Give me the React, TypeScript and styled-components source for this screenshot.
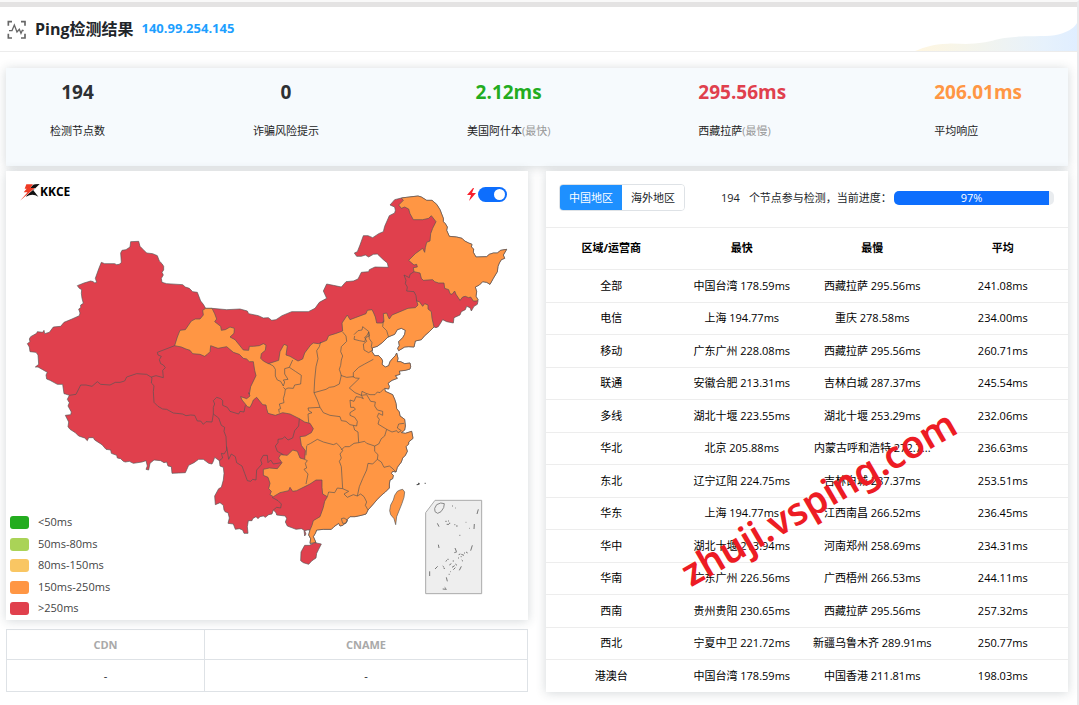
import React, { useState } from "react";
import styled, { createGlobalStyle } from "styled-components";

const GlobalStyle = createGlobalStyle`
  *, *::before, *::after { box-sizing: border-box; }
  body {
    margin: 0;
    background: #fff;
    color: #212529;
    font: 11px/16px "Open Sans", "Noto Sans CJK SC", sans-serif;
  }
  button, input { font: inherit; margin: 0; }
`;

const Page = styled.div`
  min-height: 100vh;
  border-top: 2px solid #f9f9f9;
  border-right: 2px solid #e9e9eb;
`;

const TopBand = styled.div`
  height: 5px;
  background: #e4e3e3;
`;

const Header = styled.header`
  position: relative;
  display: flex;
  align-items: center;
  height: 45px;
  padding-left: 7px;
  border-bottom: 1px solid #ececec;
`;

const Title = styled.h1`
  margin: 0 8px 0 9px;
  font-size: 16px;
  line-height: 24px;
  font-weight: 700;
`;

const Address = styled.span`
  margin-bottom: 2px;
  font-size: 13px;
  font-weight: 700;
  color: #1e9fff;
`;

const Wave = styled.svg`
  position: absolute;
  right: 0;
  bottom: 0;
  width: 162px;
  height: 28px;
`;

const Content = styled.main`
  padding: 16px 9px 12px 6px;
`;

const cardShadow = "0 1px 10px rgba(40, 60, 70, 0.2)";

const Stats = styled.section`
  display: flex;
  justify-content: space-between;
  height: 98px;
  padding: 12px 46px 0 44px;
  background: #f6fafd;
  box-shadow: ${cardShadow};
`;

const StatValue = styled.div<{ $color: string }>`
  font-size: 19px;
  line-height: 24px;
  font-weight: 700;
  text-align: center;
  color: ${(p) => p.$color};
`;

const StatLabel = styled.div`
  margin-top: 19px;
  color: #222;
`;

const Muted = styled.span`
  color: #999;
`;

const Columns = styled.div`
  display: grid;
  grid-template-columns: 1fr 1fr;
  gap: 18px;
  align-items: start;
  margin-top: 5px;
`;

const Card = styled.section`
  position: relative;
  background: #fff;
  box-shadow: ${cardShadow};
`;

const MapDrawing = styled.svg`
  display: block;
  width: 100%;
`;

const Logo = styled.div`
  position: absolute;
  top: 12px;
  left: 14px;
  display: flex;
  align-items: center;
  font-size: 12px;
  font-weight: 700;
  color: #000;
`;

const SpeedToggle = styled.label`
  position: absolute;
  top: 16px;
  right: 21px;
  display: flex;
  align-items: center;
  gap: 2px;
`;

const Switch = styled.input`
  appearance: none;
  display: flex;
  align-items: center;
  width: 29px;
  height: 15px;
  padding: 0 2px;
  border-radius: 8px;
  background: #b5bbc2;
  cursor: pointer;
  &::before {
    content: "";
    width: 11px;
    height: 11px;
    border-radius: 50%;
    background: #fff;
  }
  &:checked {
    justify-content: flex-end;
    background: #0d6efd;
  }
`;

const Legend = styled.ul`
  position: absolute;
  left: 4px;
  bottom: 5px;
  display: flex;
  flex-direction: column;
  justify-content: space-between;
  height: 99px;
  margin: 0;
  padding: 0;
  list-style: none;
`;

const LegendItem = styled.li`
  display: flex;
  align-items: center;
  gap: 9px;
  height: 13px;
  line-height: 11px;
  color: #444;
`;

const LegendText = styled.span`
  padding-bottom: 2px;
`;

const Swatch = styled.span<{ $color: string }>`
  width: 19px;
  height: 13px;
  border-radius: 3px;
  background: ${(p) => p.$color};
`;

const RecordTable = styled.table`
  width: 100%;
  margin-top: 9px;
  border-collapse: collapse;
  table-layout: fixed;
  text-align: center;
  th, td {
    height: 32px;
    padding: 0;
    border: 1px solid #dee2e6;
  }
  th {
    height: 30px;
    font-weight: 700;
    color: #a9a9a9;
  }
  th:first-child { width: 38%; }
`;

const Toolbar = styled.div`
  display: flex;
  align-items: center;
  height: 56px;
  padding: 0 14px 3px 13px;
`;

const Tabs = styled.div`
  display: flex;
  border: 1px solid #dee2e6;
  border-radius: 4px;
  overflow: hidden;
`;

const Tab = styled.button<{ $active: boolean }>`
  height: 25px;
  padding: 0 9px;
  border: 0;
  color: ${(p) => (p.$active ? "#fff" : "#212529")};
  background: ${(p) => (p.$active ? "#1e90ff" : "#fff")};
  cursor: pointer;
`;

const NodeCount = styled.span`
  margin: 0 9px 0 36px;
`;

const Progress = styled.div`
  flex: 1;
  height: 14px;
  margin-left: 2px;
  border-radius: 5px;
  overflow: hidden;
  background: #e9ecef;
`;

const ProgressFill = styled.div`
  height: 100%;
  line-height: 13px;
  text-align: center;
  color: #fff;
  background: #0d6efd;
`;

const ResultTable = styled.table`
  width: 100%;
  border-spacing: 0;
  table-layout: fixed;
  text-align: center;
  color: #000;
  th, td {
    height: 33px;
    padding: 0 5px;
    border-top: 1px solid #ededed;
    overflow: hidden;
    text-overflow: ellipsis;
    white-space: nowrap;
  }
  th {
    height: 42px;
    padding-bottom: 2px;
    font-weight: 700;
  }
  tbody tr:nth-child(even) td {
    height: 32px;
    padding-bottom: 2px;
  }
`;

const Watermark = styled.div`
  position: absolute;
  top: 326px;
  left: 50%;
  transform: translate(-50%, -50%) translateX(11px) rotate(-30deg);
  font-family: "Noto Sans", sans-serif;
  font-size: 38px;
  line-height: 48px;
  font-weight: 600;
  white-space: nowrap;
  color: #ed1c24;
  pointer-events: none;
`;

/* The map is digitised on sheets; each sheet has its own origin. */
type Sheet = [number, number];
const NW: Sheet = [0, 0];
const NE: Sheet = [780, 0];
const SW: Sheet = [0, 675];
const SE: Sheet = [780, 675];
const MID: Sheet = [720, 405];

const on = ([dx, dy]: Sheet, points: string) =>
  points
    .split(" ")
    .map((pair) => {
      const [x, y] = pair.split(",").map(Number);
      return `${x + dx},${y + dy}`;
    })
    .join(" ");

const heilongjiangCoast = on(
  NE,
  "424,99 440,97 474,93 484,96 500,106 516,106 530,118 540,134 550,160 550,170 556,176 562,186 560,196 568,214 590,216 606,220 614,228 626,234 636,238 634,246 641,252 640,262 648,276 680,275 688,268 700,264 712,264 722,256 740,253 730,270 734,280 724,284 718,294 714,304 712,320 700,340 690,358 680,352 668,350 658,360 646,366 650,380 648,394 654,404"
);

const eastCoast = [
  on(
    NE,
    "522,486 508,500 494,512 484,524 466,528 462,546 446,545 434,546 416,557 413,550 418,542 416,530 428,518 434,508 436,496 424,490 412,494 404,508 384,516 368,532 352,544 338,548 336,560 344,572 356,572 364,580 368,588 366,598 376,606 386,602 390,590 398,580 406,572 410,564 414,580 412,590 422,590 434,596 450,594 452,604 450,612 436,616 418,618 420,628 406,632 412,640 396,646 384,655 388,664 386,672 374,670"
  ),
  on(
    SE,
    "376,4 398,14 404,28 408,40 410,56 418,66 420,78 434,88 436,108 434,120 424,128 436,130 455,124 459,145 446,156 446,162 438,170 442,184 436,196 428,204 424,216 412,232 408,246 398,244 394,250 400,256 398,266 390,270 388,282 388,294 376,306 364,316 352,328 340,342 324,360 318,372 304,376 285,380 270,380 262,388 260,396 248,406 240,408 236,400 222,410 214,418 190,418 170,420 166,430 160,440 168,458 150,460 152,446 146,435 150,420"
  ),
].join(" ");

const mainland = [
  on(
    NW,
    "82,536 90,530 88,522 92,515 110,505 112,500 128,502 132,496 134,506 148,502 160,486 182,484 192,472 216,462 238,452 240,444 236,432 242,428 242,420 250,415 246,400 244,385 245,374 238,370 232,362 252,354 272,348 280,350 284,354 290,352 286,340 296,312 304,292 314,296 344,296 350,299 358,298 364,292 362,264 366,256 378,254 390,246 392,230 416,229 420,244 430,254 440,264 458,266 472,272 478,288 486,296 491,304 491,315 486,322 490,330 484,340 486,352 500,356 548,359 556,366 568,370 578,380 592,382 602,408 610,418 617,430 636,430 680,434 720,432 742,438 746,446 775,452 790,459"
  ),
  on(
    NE,
    "25,458 35,466 48,464 66,452 95,440 145,440 165,430 178,412 200,400 190,378 200,357 220,361 244,366 258,350 280,348 294,342 304,322 326,320 328,314 345,306 385,307 382,294 370,284 352,267 340,268 326,276 316,270 304,274 290,274 283,264 292,260 300,240 310,212 324,212 338,218 356,206 370,200 374,184 388,152 404,144 406,136 404,126 390,120 404,104"
  ),
  heilongjiangCoast,
  on(
    NE,
    "654,408 652,418 642,424 634,438 630,428 620,424 616,434 604,440 600,450 582,458 580,474 560,470 548,464 542,474 535,485 528,488"
  ),
  eastCoast,
  on(
    SE,
    "142,420 134,422 138,432 134,438 132,420 124,416 108,418 82,408 76,396 80,386 76,378 50,375 48,368 40,360 36,372 26,374 16,382 10,378 0,380"
  ),
  on(
    SW,
    "774,386 768,380 758,386 756,392 745,392 742,410 744,430 732,430 728,420 718,416 706,418 700,402 684,400 688,384 684,368 676,366 672,360 670,346 660,338 646,344 644,318 656,296 664,292 670,270 672,250 670,232 660,228 658,212 644,202 640,214 636,222 626,220 610,208 596,208 582,218 566,226 556,248 536,249 516,250 514,230 504,228 500,216 492,218 482,212 462,210 450,220 446,240 438,238 442,228 438,212 426,216 400,220 388,214 376,216 370,214 362,206 352,204 350,196 334,190 332,180 318,178 306,164 284,150 280,143 266,143 262,152 254,144 236,138 226,128 210,118 204,110 206,96 196,76 212,74 214,66 204,48 208,38 202,28 208,16 196,12"
  ),
  on(
    NW,
    "192,686 190,672 188,658 172,658 150,646 140,642 138,630 142,622 128,614 114,606 106,606 116,598 114,570 108,562 90,560 88,546"
  ),
].join(" ");

const heilongjiang = [
  heilongjiangCoast,
  on(
    NE,
    "650,408 640,408 632,396 626,398 616,394 608,396 600,406 588,388 584,378 576,388 570,386 566,374 554,370 552,354 536,354 524,350 518,344 490,346 484,340 480,324 462,320 460,308 472,306 470,298 462,300 446,286 466,266 488,250 494,262 496,248 500,232 510,228 512,206 518,190 528,170 514,152 506,160 488,164 460,164 450,146 446,132 434,126 424,130 416,120 430,106"
  ),
].join(" ");

const centralProvinces = [
  on(
    NW,
    "524,542 532,516 540,496 556,494 574,468 586,462 600,462 610,450 608,436 617,430 636,430 644,446 650,462 644,470 662,484 664,496 676,494 690,486 703,490 702,505 690,516 705,524 718,540 730,555 746,556 748,544 760,544 778,542 790,536 798,540 796,556 784,566 782,580 790,588"
  ),
  on(
    NE,
    "25,596 56,586 60,560 72,538 82,542 78,570 90,574 114,588 128,582 134,564 152,540 160,534 176,536 200,526 206,512 226,506 248,498 246,474 262,450 270,464 286,458 318,446 322,436 336,434 341,444 346,456 350,474 366,474 372,470 370,446 380,444 384,454 388,462 396,450 420,440 444,430 466,428 474,420 470,408 478,410 488,424 494,416 504,420 504,432 514,440 516,460"
  ),
  eastCoast,
  on(
    SE,
    "156,406 160,392 180,380 190,352 194,334 202,320 188,312 186,292 186,270 168,270 150,282 130,292 110,302 98,304 90,292 86,302 60,308 40,320 30,314 34,304 26,296 30,280 24,262 10,256 10,238 28,234 52,236 66,218 56,204 62,194 82,196 98,180 112,184 120,204 134,208 136,182 124,166 120,140 136,138 154,128 160,116 150,100 134,96 118,86 90,72 68,68 46,76 24,70 20,56"
  ),
  on(SW, "798,45 788,44 770,22 760,30 756,40 750,52 742,50 736,42 726,30 722,20 740,26 750,18 746,8"),
  on(
    NW,
    "748,688 752,665 768,632 764,616 760,590 748,590 740,582 730,580 718,568 700,562 680,545 654,550 632,542 630,560 622,568 614,574 600,568 578,566 570,556 558,552 544,546"
  ),
].join(" ");

const taiwan = on(SE, "420,300 428,298 434,306 432,322 426,340 418,360 410,380 407,404 402,386 392,374 389,362 392,345 400,330 404,316 412,304");
const hainan = on(SE, "134,466 148,466 164,458 184,462 176,478 170,490 168,504 156,512 146,523 130,518 122,512 123,486");

const borders = [
  on(NW, "524,542 498,552 472,562 474,570 484,574 478,584 482,596 490,600 496,608 488,616 490,638 468,632 454,636"),
  on(NW, "208,691 228,688 242,660 258,660 276,664 292,650 302,658 330,660 346,652 360,652 374,648 380,636 410,626 440,628 456,638 454,654 462,662 460,680 462,712 474,724 488,732 500,733 520,744 548,747 558,752 572,750 584,751 592,768 602,768 610,778 618,770 636,771 640,747"),
  on(SW, "640,72 640,52 644,42 640,32 650,22 662,26 668,32 668,46 682,52 690,64 716,72 720,64 732,66 736,46"),
  on(SW, "640,72 656,84 664,106 674,112 672,124 678,140 680,180 672,192 664,190 668,204 658,212"),
  on(SW, "680,170 686,208 694,192 706,200 710,218 726,228 734,250 742,272 752,274 758,268 768,270 770,240 786,222 782,210 790,196 802,196 804,218 812,210 820,222 844,218"),
  on(SE, "36,322 54,332 64,342 62,354 50,352 40,360"),
  on(SE, "118,86 116,108 104,122 98,144 84,150 74,140 68,146 54,148 54,158 46,168 52,184 70,194"),
  on(MID, "85,190 100,198 106,208 106,228 112,240 122,244 130,258 134,246 130,240 144,238 134,222 134,206 148,202 158,180"),
  on(MID, "148,202 166,214 184,226 182,252 164,255 160,265 144,264 136,268 130,262"),
  on(MID, "136,268 134,282 130,296 132,308 118,312 122,326 116,328 118,338"),
  on(MID, "242,126 238,140 230,152 234,176 228,200 224,240 222,278"),
  on(MID, "308,96 318,108 320,124 304,140 302,155 308,168 304,180 302,196 298,208 304,226 298,252 282,260 268,262 258,268 222,278"),
  on(MID, "222,278 232,300 240,322 204,324 206,332 216,338 204,342 206,368"),
  on(MID, "240,322 250,338 270,346 300,350 304,362 318,364 330,374 340,376"),
  on(MID, "340,376 350,378 352,364 344,352 330,346 330,338 346,328 342,322 332,322 330,300 342,304 348,290 362,292 370,296 364,286"),
  on(MID, "302,226 320,232 340,230 346,234 358,235 328,264 345,278 364,286"),
  on(MID, "340,232 340,218 356,202 374,192 400,178"),
  on(MID, "342,104 354,92 366,90 368,80 378,88 386,94 388,108 378,112 374,125 358,122 342,118 344,108"),
  on(MID, "386,96 380,108 374,112 380,124 370,132 372,150 386,158 398,150 394,140 396,128 388,116 386,96"),
  on(MID, "430,62 428,80 440,92 446,112"),
  on(NE, "462,320 450,328 448,338 432,330 438,346 436,356 442,366 440,378 462,380 468,392 470,408"),
  on(MID, "364,286 366,274 378,280 390,284 405,284 412,276 420,278 432,266"),
  on(MID, "364,286 380,284 392,304 406,306 404,318 412,330 428,334 428,346 416,340 412,350 418,358 414,372 440,388"),
  on(MID, "440,388 456,396 470,392 474,398 484,392 472,384 476,372 492,370"),
  on(MID, "440,388 434,408 424,416 416,432 404,438"),
  on(MID, "340,376 344,390 354,396 356,428 374,424 380,430 404,438"),
  on(MID, "200,436 212,430 232,418 250,426 280,434 290,430 300,440 308,452 300,462 304,474 298,484 304,500 308,566"),
  on(MID, "304,450 314,440 328,440 342,430 356,428"),
  on(SE, "138,196 140,168"),
  on(SE, "134,208 142,212 136,220 140,234 132,238 144,252 138,282"),
  on(SE, "202,320 206,306 224,308 232,294 248,296 266,304 252,312 262,322 280,314 292,318 298,290 308,266 320,240 324,220 338,222 352,208 354,194 344,184 344,168"),
  on(SE, "352,208 364,216 372,232 388,228 396,234 408,246"),
  on(SE, "292,318 302,312 312,320 320,336 316,346 324,360"),
  on(SE, "244,386 252,384 262,390 258,400 248,400 244,386"),
];

const islets =
  "M532,400l5,10M535,464l2,10M509,544v14M655,358l-4,14M643,402l-1,15M637,466l-5,16M604,529l-6,12M559,562l3,12M525,537l8,-8M548,597l12,1M554,592l4,4M576,348h3M585,354h2M556,394h4M560,403h7M564,393h3M569,398v4M583,404h3M588,408h5M617,397h2M627,415h2M598,436h3M585,474l4,10M583,488l8,-3M596,494l5,-2M604,493l8,3M594,504h3M605,510l4,4M618,486l5,3M578,513h4M557,514l4,-3M548,528l4,4M551,535h4M568,525l6,-4M576,532l8,-5M580,539l6,-6M586,522l5,4M570,545h2M566,553h3M562,508h4M602,500h3M612,489h3";

const legend = [
  { color: "#23ac1f", label: "<50ms" },
  { color: "#aad357", label: "50ms-80ms" },
  { color: "#f9c663", label: "80ms-150ms" },
  { color: "#ff9644", label: "150ms-250ms" },
  { color: "#e0404d", label: ">250ms" },
];

const stats = [
  { value: "194", color: "#2d3033", label: "检测节点数" },
  { value: "0", color: "#2d3033", label: "诈骗风险提示" },
  { value: "2.12ms", color: "#23ac1f", label: "美国阿什本", note: "(最快)" },
  { value: "295.56ms", color: "#e0404d", label: "西藏拉萨", note: "(最慢)" },
  { value: "206.01ms", color: "#ff9644", label: "平均响应" },
];

const results = [
  ["全部", "中国台湾 178.59ms", "西藏拉萨 295.56ms", "241.08ms"],
  ["电信", "上海 194.77ms", "重庆 278.58ms", "234.00ms"],
  ["移动", "广东广州 228.08ms", "西藏拉萨 295.56ms", "260.71ms"],
  ["联通", "安徽合肥 213.31ms", "吉林白城 287.37ms", "245.54ms"],
  ["多线", "湖北十堰 223.55ms", "湖北十堰 253.29ms", "232.06ms"],
  ["华北", "北京 205.88ms", "内蒙古呼和浩特 272.7...", "236.63ms"],
  ["东北", "辽宁辽阳 224.75ms", "吉林白城 287.37ms", "253.51ms"],
  ["华东", "上海 194.77ms", "江西南昌 266.52ms", "236.45ms"],
  ["华中", "湖北十堰 213.94ms", "河南郑州 258.69ms", "234.31ms"],
  ["华南", "广东广州 226.56ms", "广西梧州 266.53ms", "244.11ms"],
  ["西南", "贵州贵阳 230.65ms", "西藏拉萨 295.56ms", "257.32ms"],
  ["西北", "宁夏中卫 221.72ms", "新疆乌鲁木齐 289.91ms", "250.77ms"],
  ["港澳台", "中国台湾 178.59ms", "中国香港 211.81ms", "198.03ms"],
];

const regions = ["中国地区", "海外地区"];

function ChinaMap() {
  return (
    <MapDrawing viewBox="18 18 1566 1347" role="img" aria-label="中国地图">
      <g stroke="#555" strokeOpacity="0.65" strokeWidth="3" strokeLinejoin="round">
        <polygon points={mainland} fill="#e0404d" />
        <polygon points={heilongjiang} fill="#ff9644" />
        <polygon points={centralProvinces} fill="#ff9644" />
        <polygon points={taiwan} fill="#ff9644" />
        <polygon points={hainan} fill="#e0404d" />
        {borders.map((line) => (
          <polyline key={line} points={line} fill="none" />
        ))}
      </g>
      <g transform="translate(780 675)" stroke="#777" strokeWidth="3" fill="none">
        <path d="M525,331H665V611H497V368Z" fill="#eee" stroke="#aaa" />
        <path d="M530,344l12,-5l11,2l-2,12l-8,12l-10,5l-8,-5l-1,-10z" stroke="#888" />
        <path d={islets} />
        <path d="M470,284l8,-2M474,280l5,1M494,280h3" stroke="#555" strokeWidth="4" />
      </g>
    </MapDrawing>
  );
}

export default function App() {
  const [region, setRegion] = useState(0);
  const progress = 97;

  return (
    <>
      <GlobalStyle />
      <Page>
        <TopBand />
        <Header>
          <svg width="19" height="19" viewBox="0 0 57 57" fill="none" stroke="#666" strokeWidth="5">
            <path d="M4,17V5H15M42,5H54V17M4,41V54H15M42,54H54V41" />
            <path d="M6,32H15L22,15L30,36L37,28L42,40L46,31L50,32" strokeWidth="4" />
          </svg>
          <Title>Ping检测结果</Title>
          <Address>140.99.254.145</Address>
          <Wave viewBox="0 0 486 84" preserveAspectRatio="none" aria-hidden="true">
            <defs>
              <linearGradient id="wave">
                <stop offset="0" stopColor="#fff6e0" />
                <stop offset="0.3" stopColor="#f6f5ea" />
                <stop offset="0.8" stopColor="#e6f1fc" />
                <stop offset="1" stopColor="#e0eeff" />
              </linearGradient>
            </defs>
            <path
              fill="url(#wave)"
              d="M0,84C30,72 50,64 100,62C135,61 160,66 210,58C250,50 260,42 340,40C395,39 425,40 450,28C470,20 480,10 486,0V84Z"
            />
          </Wave>
        </Header>
        <Content>
          <Stats>
            {stats.map((s) => (
              <div key={s.label}>
                <StatValue $color={s.color}>{s.value}</StatValue>
                <StatLabel>
                  {s.label}
                  {s.note && <Muted>{s.note}</Muted>}
                </StatLabel>
              </div>
            ))}
          </Stats>
          <Columns>
            <div>
              <Card>
                <ChinaMap />
                <Logo>
                  <svg width="20" height="18" viewBox="60 57 60 54">
                    <path fill="#111" d="M88,74L99,63Q103,60 119,60L100,79L115,98Q98,86 78,98Z" />
                    <path fill="#fff" d="M106,72L60,111L86,84L92,72Z" />
                    <path fill="#ef3b24" d="M79,61H99L91,72H104L60,110L83,85H71L80,74H74Z" />
                  </svg>
                  KKCE
                </Logo>
                <SpeedToggle>
                  <svg width="9" height="13" viewBox="0 0 9 13">
                    <path fill="#f8202c" d="M6,0L0,7H4L2,13L9,5H5L7,0Z" />
                  </svg>
                  <Switch type="checkbox" defaultChecked aria-label="加速" />
                </SpeedToggle>
                <Legend>
                  {legend.map((l) => (
                    <LegendItem key={l.label}>
                      <Swatch $color={l.color} />
                      <LegendText>{l.label}</LegendText>
                    </LegendItem>
                  ))}
                </Legend>
              </Card>
              <RecordTable>
                <thead>
                  <tr>
                    <th>CDN</th>
                    <th>CNAME</th>
                  </tr>
                </thead>
                <tbody>
                  <tr>
                    <td>-</td>
                    <td>-</td>
                  </tr>
                </tbody>
              </RecordTable>
            </div>
            <Card>
              <Toolbar>
                <Tabs>
                  {regions.map((name, i) => (
                    <Tab key={name} type="button" $active={region === i} onClick={() => setRegion(i)}>
                      {name}
                    </Tab>
                  ))}
                </Tabs>
                <NodeCount>194</NodeCount>
                <span>个节点参与检测，当前进度：</span>
                <Progress role="progressbar" aria-valuenow={progress} aria-label="当前进度">
                  <ProgressFill style={{ width: `${progress}%` }}>{progress}%</ProgressFill>
                </Progress>
              </Toolbar>
              <ResultTable>
                <thead>
                  <tr>
                    <th>区域/运营商</th>
                    <th>最快</th>
                    <th>最慢</th>
                    <th>平均</th>
                  </tr>
                </thead>
                <tbody>
                  {results.map((row) => (
                    <tr key={row[0]}>
                      {row.map((cell, i) => (
                        <td key={i}>{cell}</td>
                      ))}
                    </tr>
                  ))}
                </tbody>
              </ResultTable>
              <Watermark>zhuji.vsping.com</Watermark>
            </Card>
          </Columns>
        </Content>
      </Page>
    </>
  );
}
